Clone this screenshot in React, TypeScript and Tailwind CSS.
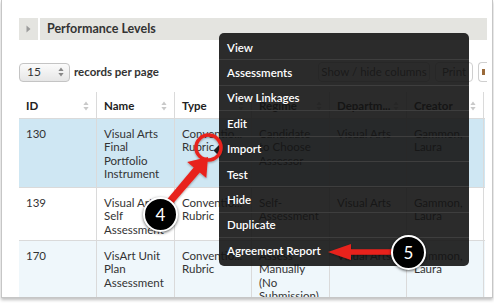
import React from "react";

const rows = [
  {
    id: "130",
    name: ["Visual Arts", "Final", "Portfolio", "Instrument"],
    type: ["Conventio...", "Rubric"],
    regime: ["Candidate", "to Choose", "Assessor"],
    dept: "Visual Arts",
    creator: ["Gammon,", "Laura"],
    bg: "bg-[#cfe7f3]",
    h: "h-[69px]",
  },
  {
    id: "139",
    name: ["Visual Arts", "Self", "Assessment"],
    type: ["Conventio...", "Rubric"],
    regime: ["Self-", "Assessment"],
    dept: "Visual Arts",
    creator: ["Gammon,", "Laura"],
    bg: "bg-white",
    h: "h-[53px]",
  },
  {
    id: "170",
    name: ["VisArt Unit", "Plan", "Assessment"],
    type: ["Conventio...", "Rubric"],
    regime: ["Assess", "Manually", "(No", "Submission)"],
    dept: "Visual Arts",
    creator: ["Gammon,", "Laura"],
    bg: "bg-[#eff7fb]",
    h: "h-[70px]",
  },
];

const menuItems = [
  "View",
  "Assessments",
  "View Linkages",
  "Edit",
  "Import",
  "Test",
  "Hide",
  "Duplicate",
  "Agreement Report",
];

function SortIcon({ color = "#c9c9c9" }: { color?: string }) {
  return (
    <svg width="6" height="10" viewBox="0 0 6 10" className="shrink-0">
      <path d="M3 0.5 L5.6 4 H0.4 Z" fill={color} />
      <path d="M3 9.5 L5.6 6 H0.4 Z" fill={color} />
    </svg>
  );
}

function Lines({ lines }: { lines: string[] }) {
  return (
    <>
      {lines.map((l, i) => (
        <div key={i} className="whitespace-nowrap">
          {l}
        </div>
      ))}
    </>
  );
}

function Badge({ n }: { n: string }) {
  return (
    <div className="flex h-[35px] w-[35px] items-center justify-center rounded-full border-[2.5px] border-white bg-black text-[17px] text-white shadow-[0_1px_3px_rgba(0,0,0,0.6)]">
      {n}
    </div>
  );
}

export default function App() {
  const headers = ["ID", "Name", "Type", "Regime", "Departm...", "Creator"];
  return (
    <div className="relative h-[303px] w-[494px] overflow-hidden bg-white text-[#333] [font-family:Lato,'Noto_Sans',sans-serif]">
      <div className="ml-[1px] h-[298px] w-[492px] overflow-hidden border-x border-b border-[#c6c6c6] pl-[17px] pr-[5px] pt-[18px] shadow-[0_2px_3px_rgba(0,0,0,0.25)]">
        {/* section bar */}
        <div className="flex h-[22px] items-center bg-[#e4e4e0]">
          <div className="flex h-full w-[21px] items-center justify-center border-r-2 border-white">
            <svg width="5" height="8" viewBox="0 0 5 8">
              <path d="M0.5 0.5 L4.5 4 L0.5 7.5 Z" fill="#9a9a9a" />
            </svg>
          </div>
          <span className="pl-[7px] text-[12.5px] font-bold text-[#333]">Performance Levels</span>
        </div>

        {/* toolbar */}
        <div className="mt-[22px] flex h-[20px] items-center">
          <div className="flex h-[19px] w-[51px] items-center justify-between rounded-[4px] border border-[#c4c4c4] bg-gradient-to-b from-[#fbfbfb] to-[#e6e6e6] pl-[7px] pr-[5px] text-[12px] text-[#333]">
            <span>15</span>
            <SortIcon color="#888" />
          </div>
          <span className="ml-[4px] text-[11.5px] font-bold text-[#333]">records per page</span>
          <div className="ml-auto flex h-[20px] w-[169px] shrink-0 gap-[5px] overflow-hidden">
            <div className="flex h-[20px] w-[112px] shrink-0 items-center justify-center rounded-[4px] border border-[#cfcfcf] bg-white text-[11.5px] text-[#555]">
              Show / hide columns
            </div>
            <div className="flex h-[20px] w-[38px] shrink-0 items-center justify-center rounded-[4px] border border-[#cfcfcf] bg-white text-[11.5px] text-[#555]">
              Print
            </div>
            <div className="flex h-[20px] w-[12px] shrink-0 items-center rounded-l-[4px] border-y border-l border-[#cfcfcf] bg-white pl-[3px]">
              <svg width="4" height="6" viewBox="0 0 4 6">
                <rect x="0" y="0" width="3" height="6" fill="#9a6a3a" />
              </svg>
            </div>
          </div>
        </div>

        {/* table */}
        <div className="mt-[10px] w-[466px]">
          <div className="grid h-[27px] grid-cols-[78px_78px_77px_78px_77px_77px] border-b border-[#dadada]">
            {headers.map((h) => (
              <div
                key={h}
                className="flex items-center justify-between border-r border-[#dadada] pl-[7px] pr-[7px] pt-[1px] text-[11.5px] font-bold text-[#222]"
              >
                <span className="whitespace-nowrap">{h}</span>
                <SortIcon />
              </div>
            ))}
          </div>
          {rows.map((r) => (
            <div
              key={r.id}
              className={`grid grid-cols-[78px_78px_77px_78px_77px_77px] border-b border-[#dadada] text-[11.5px] leading-[13.3px] ${r.bg} ${r.h}`}
            >
              <div className="border-r border-[#dadada] pl-[7px] pt-[8px]">{r.id}</div>
              <div className="border-r border-[#dadada] pl-[7px] pt-[8px]">
                <Lines lines={r.name} />
              </div>
              <div className="overflow-hidden border-r border-[#dadada] pl-[7px] pt-[8px]">
                <Lines lines={r.type} />
              </div>
              <div className="border-r border-[#dadada] pl-[7px] pt-[8px]">
                <Lines lines={r.regime} />
              </div>
              <div className="border-r border-[#dadada] pl-[7px] pt-[8px]">{r.dept}</div>
              <div className="border-r border-[#dadada] pl-[7px] pt-[8px]">
                <Lines lines={r.creator} />
              </div>
            </div>
          ))}
        </div>
      </div>

      {/* context menu */}
      <div className="absolute left-[219px] top-[33px] flex h-[233px] w-[250px] flex-col rounded-[5px] bg-[rgba(20,20,20,0.9)] py-[2px]">
        <svg width="6" height="11" viewBox="0 0 6 11" className="absolute left-[-6px] top-[112px]">
          <path d="M6 0 L0.5 5.5 L6 11 Z" fill="rgba(20,20,20,0.95)" />
        </svg>
        {menuItems.map((m, i) => (
          <div
            key={m}
            className={`flex h-[25.4px] items-center pl-[8px] text-[11.5px] font-semibold text-white ${
              i < menuItems.length - 1 ? "border-b border-[#3e3e3e]" : ""
            }`}
          >
            {m}
          </div>
        ))}
      </div>

      {/* annotations */}
      <svg
        className="pointer-events-none absolute left-0 top-0"
        width="494"
        height="303"
        viewBox="0 0 494 303"
      >
        <defs>
          <filter id="sh" x="-20%" y="-20%" width="140%" height="140%">
            <feDropShadow dx="0" dy="1" stdDeviation="0.8" floodColor="#000" floodOpacity="0.35" />
          </filter>
        </defs>
        <g filter="url(#sh)" fill="#e8231c">
          <circle cx="208.5" cy="147.5" r="12.5" fill="none" stroke="#e8231c" strokeWidth="3.5" />
          <polygon points="161.9,205.4 167.4,210.1 199.8,172.6 206.3,178.1 208,157 187.2,162 193.7,167.5" />
          <polygon points="328,252 351,244 351,249.2 395,249.2 395,254.8 351,254.8 351,260" />
        </g>
      </svg>
      <div className="absolute left-[143px] top-[197px]">
        <Badge n="4" />
      </div>
      <div className="absolute left-[391px] top-[235px]">
        <Badge n="5" />
      </div>
    </div>
  );
}
